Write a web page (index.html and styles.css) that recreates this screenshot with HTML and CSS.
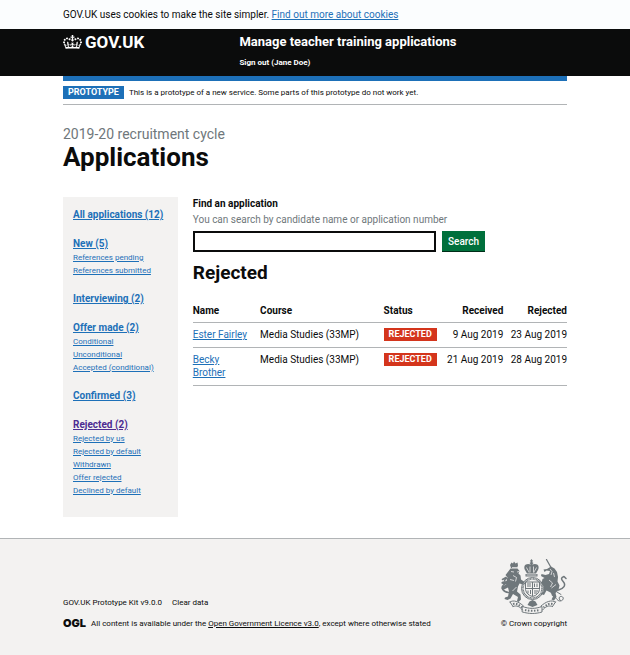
FILE: index.html
```html
<!DOCTYPE html>
<html lang="en">
<head>
<meta charset="utf-8">
<meta name="viewport" content="width=device-width, initial-scale=1">
<title>Applications - Manage teacher training applications</title>
<link rel="stylesheet" href="styles.css">
</head>
<body>
<div class="cookie-bar">
  <p class="container">GOV.UK uses cookies to make the site simpler. <a href="#">Find out more about cookies</a></p>
</div>
<header class="header">
  <div class="container header-inner">
    <a class="logo" href="#">
      <svg class="crown" viewBox="0 0 132 97" aria-hidden="true"><path d="M25 30.2c3.5 1.5 7.7-.2 9.1-3.7 1.5-3.6-.2-7.8-3.9-9.2-3.6-1.4-7.6.3-9.1 3.9-1.4 3.5.3 7.5 3.9 9zM9 39.5c3.6 1.5 7.8-.2 9.2-3.7 1.5-3.6-.2-7.8-3.9-9.1-3.6-1.5-7.6.2-9.1 3.8-1.4 3.5.3 7.5 3.8 9zM4.4 57.2c3.5 1.5 7.7-.2 9.1-3.8 1.5-3.6-.2-7.7-3.9-9.1-3.5-1.5-7.6.3-9.1 3.8-1.4 3.5.3 7.6 3.9 9.1zm38.3-21.4c3.5 1.5 7.7-.2 9.1-3.8 1.5-3.6-.2-7.7-3.9-9.1-3.6-1.5-7.6.3-9.1 3.8-1.3 3.6.4 7.7 3.9 9.1zm64.4-5.6c-3.6 1.5-7.8-.2-9.1-3.7-1.5-3.6.2-7.8 3.8-9.2 3.6-1.4 7.7.3 9.2 3.9 1.3 3.5-.4 7.5-3.9 9zm15.9 9.3c-3.6 1.5-7.7-.2-9.1-3.7-1.5-3.6.2-7.8 3.7-9.1 3.6-1.5 7.7.2 9.2 3.8 1.5 3.5-.3 7.5-3.8 9zm4.7 17.7c-3.6 1.5-7.8-.2-9.2-3.8-1.5-3.6.2-7.7 3.9-9.1 3.6-1.5 7.7.3 9.2 3.8 1.3 3.5-.4 7.6-3.9 9.1zM89.3 35.8c-3.6 1.5-7.8-.2-9.2-3.8-1.4-3.6.2-7.7 3.9-9.1 3.6-1.5 7.7.3 9.2 3.8 1.4 3.6-.3 7.7-3.9 9.1zM69.7 17.7l8.9 4.7V9.3l-8.9 2.8c-.2-.3-.5-.6-.9-.9L72.4 0H59.6l3.5 11.2c-.3.3-.6.5-.9.9l-8.8-2.8v13.1l8.8-4.7c.3.3.6.7.9.9l-5 15.4v.1c-.2.8-.4 1.6-.4 2.4 0 4.1 3.1 7.5 7 8.1h.2c.3 0 .7.1 1 .1.4 0 .7 0 1-.1h.2c4-.6 7.1-4.1 7.1-8.1 0-.8-.1-1.7-.4-2.4V34l-5.1-15.4c.4-.2.7-.6 1-.9zM66 92.8c16.9 0 32.8 1.1 47.1 3.2 4-16.9 8.9-26.7 14-33.5l-9.6-3.4c1 4.9 1.1 7.2 0 10.2-1.5-1.4-3-4.3-4.2-8.7L108.6 76c2.8-2 5-3.2 7.5-3.3-4.4 9.4-10 11.9-13.6 11.2-4.3-.8-6.3-4.6-5.6-7.9 1-4.7 5.7-5.9 8-.5 4.3-8.7-3-11.4-7.6-8.8 7.1-7.2 7.9-13.5 2.1-21.1-8 6.1-8.1 12.3-4.5 20.8-4.7-5.4-12.1-2.5-9.5 6.2 3.4-5.2 7.9-2 7.2 3.1-.6 4.3-6.4 7.8-13.5 7.2-10.3-.9-10.9-8-11.2-13.8 2.5-.5 7.1 1.8 11 7.3L80.2 60c-4.1 4.4-8 5.3-12.3 5.4 1.4-4.4 8-11.6 8-11.6H55.5s6.4 7.2 7.9 11.6c-4.2-.1-8-1-12.3-5.4l1.4 16.4c3.9-5.5 8.5-7.7 10.9-7.3-.3 5.8-.9 12.8-11.1 13.8-7.2.6-12.9-2.9-13.5-7.2-.7-5 3.8-8.3 7.1-3.1 2.7-8.7-4.6-11.6-9.4-6.2 3.7-8.5 3.6-14.7-4.6-20.8-5.8 7.6-5 13.9 2.2 21.1-4.7-2.6-11.9.1-7.7 8.8 2.3-5.5 7.1-4.2 8.1.5.7 3.3-1.3 7.1-5.7 7.9-3.5.7-9-1.8-13.5-11.2 2.5.1 4.7 1.3 7.5 3.3l-4.7-15.4c-1.2 4.4-2.7 7.2-4.3 8.7-1.1-3-.9-5.3 0-10.2l-9.5 3.4c5 6.9 9.9 16.7 14 33.5 14.8-2.1 30.8-3.2 47.7-3.2z"/></svg>
      <span>GOV.UK</span>
    </a>
    <div class="header-content">
      <a class="service-name" href="#">Manage teacher training applications</a>
      <a class="sign-out" href="#">Sign out (Jane Doe)</a>
    </div>
  </div>
</header>
<div class="container">
  <div class="phase-banner">
    <strong class="tag phase-tag">PROTOTYPE</strong>
    <span>This is a prototype of a new service. Some parts of this prototype do not work yet.</span>
  </div>
  <main>
    <h1><span class="caption">2019-20 recruitment cycle</span>Applications</h1>
    <div class="columns">
      <nav class="sidebar" aria-label="Application status">
        <section><h2><a href="#">All applications (12)</a></h2></section>
        <section>
          <h2><a href="#">New (5)</a></h2>
          <ul><li><a href="#">References pending</a></li><li><a href="#">References submitted</a></li></ul>
        </section>
        <section><h2><a href="#">Interviewing (2)</a></h2></section>
        <section>
          <h2><a href="#">Offer made (2)</a></h2>
          <ul><li><a href="#">Conditional</a></li><li><a href="#">Unconditional</a></li><li><a href="#">Accepted (conditional)</a></li></ul>
        </section>
        <section><h2><a href="#">Confirmed (3)</a></h2></section>
        <section>
          <h2><a class="current" href="#">Rejected (2)</a></h2>
          <ul><li><a href="#">Rejected by us</a></li><li><a href="#">Rejected by default</a></li><li><a href="#">Withdrawn</a></li><li><a href="#">Offer rejected</a></li><li><a href="#">Declined by default</a></li></ul>
        </section>
      </nav>
      <div class="content">
        <form>
          <label for="search">Find an application</label>
          <p class="hint" id="search-hint">You can search by candidate name or application number</p>
          <div class="search-row">
            <input id="search" type="text" aria-describedby="search-hint">
            <button type="button">Search</button>
          </div>
        </form>
        <h2 class="list-title">Rejected</h2>
        <table>
          <thead>
            <tr><th class="col-name">Name</th><th class="col-course">Course</th><th class="col-status">Status</th><th class="col-received date">Received</th><th class="date">Rejected</th></tr>
          </thead>
          <tbody>
            <tr><td><a href="#">Ester Fairley</a></td><td>Media Studies (33MP)</td><td><strong class="tag rejected-tag">REJECTED</strong></td><td class="date">9 Aug 2019</td><td class="date">23 Aug 2019</td></tr>
            <tr><td><a href="#">Becky Brother</a></td><td>Media Studies (33MP)</td><td><strong class="tag rejected-tag">REJECTED</strong></td><td class="date">21 Aug 2019</td><td class="date">28 Aug 2019</td></tr>
          </tbody>
        </table>
      </div>
    </div>
  </main>
</div>
<footer class="footer">
  <div class="container footer-inner">
    <div>
      <ul class="footer-links"><li><a href="#">GOV.UK Prototype Kit v9.0.0</a></li><li><a href="#">Clear data</a></li></ul>
      <div class="licence">
        <span class="ogl">OGL</span>
        <span>All content is available under the <a href="#">Open Government Licence v3.0</a>, except where otherwise stated</span>
      </div>
    </div>
    <a class="copyright" href="#">
      <svg class="crest" viewBox="0 0 132 110" aria-hidden="true">
        <g fill="none" stroke="#6f777b" stroke-linecap="round" stroke-linejoin="round">
          <path stroke-width="3" d="M15 67C4 66-1 57 5 52s12-9 5-15l-7 4M10 37l-3 7"/>
          <path stroke-width="3" d="M115 62c11-3 15-10 10-16s-6-8 1-11l4 4"/>
          <path stroke-width="2.500" d="M91 1l9 16"/>
          <path stroke-width="2" d="M102 72c9 3 9 12 16 12s9-8 3-9-6 6-2 8M112 66l8 5"/>
          <path stroke-width="2" d="M18 86c7-5 17-1 27 8M24 95c8-3 13 0 19 7M18 86l6 9M109 86c-8-5-19-1-29 8M103 95c-8-3-14 0-20 7M109 86l-6 9M43 95c13 5 26 5 39 0v11c-13 4-26 4-39 0z"/>
          <path stroke-width="4" stroke-dasharray="3 3" stroke-linecap="butt" d="M24 90c7-2 12 2 18 7M103 90c-7-2-12 2-18 7M48 102c9 2 20 2 30 0"/>
        </g>
        <g fill="#6f777b">
          <path d="M18 12l3-5 3 2 2-4 3 4 4-2 1 6-2 5H20z"/>
          <path d="M19 19h14l4 5-2 5 4 4 1 8 7 5-3 5-7-2-3 6-2 10 7 6 1 10-5 5-3-2 2-8-10-6-5 9-6 3-6-2 1-3 6-2 2-10-2-8-8 4-5-2 2-4 8-5-6 1-5-3 3-3 9-1 1-7-4-5z"/>
          <path d="M92 20l8-5 7 4 5 7 2 10-1 9 4 8-2 9-6 6 2 8-5 7-5-2 3-6-5-8-8-4-5 9-7-2 6-5 1-9-5-7 2-9 4-2-7-4 1-4 8 2 7-2 2-6-7-1-4 3-2-5z"/>
          <path d="M61 0l3 4-2 2 3 2-3 3c11-4 16 3 12 11l-4 7H52l-4-7c-4-8 1-15 12-11l-3-3 3-2-2-2z"/>
          <path d="M49 30h24v5H49z"/>
          <path d="M57 85l6-3 6 3 4 7-10 4-10-4z"/>
        </g>
        <g fill="none" stroke="#6f777b" stroke-width="2">
          <circle cx="63" cy="59" r="22"/><circle cx="63" cy="59" r="19" stroke-width="3" stroke-dasharray="2 1"/>
          <path d="M49 46h28v15q-2 11-14 14-12-3-14-14zM63 46v28M49 59h28M52 50h8M52 54h8M67 49v7M72 49v7M54 63v6M59 62v8M66 64h8M66 68h6"/>
        </g>
        <g fill="none" stroke="#f3f2f1" stroke-width="1.500">
          <path d="M51 17c2 5 4 6 5 10M58 15v12M65 15v12M71 17c-2 5-4 6-5 10M51 32h20"/>
          <path d="M22 17h11M20 25l6 1M32 26l4-1M24 33l7 4-2 8M18 41l8 2M31 56l-8 8M98 20l4 5-2 7M105 28l2 8M96 42l7 6-4 8M110 51l-9 7"/>
        </g>
      </svg>
      <span>© Crown copyright</span>
    </a>
  </div>
</footer>
</body>
</html>
```
FILE: styles.css
```css
* { box-sizing: border-box; }
body {
  margin: 0;
  min-height: 100vh;
  display: flex;
  flex-direction: column;
  color: #0b0c0c;
  background: #fff;
  font: 10px/13px Roboto, "Liberation Sans", sans-serif;
}
h1, h2, p, ul { margin: 0; padding: 0; }
ul { list-style: none; }
a { color: #1d70b8; }
.container { width: 80%; margin: 0 auto; }
.cookie-bar { padding: 8px 0; background: #fbfdfe; }
.header { color: #fff; background: linear-gradient(#0b0c0c 47px, #fff 47px); }
.header a { color: #fff; text-decoration: none; }
.header-inner {
  display: grid;
  grid-template-columns: 35fr 65fr;
  height: 52px;
  padding-top: 5px;
  border-bottom: 5px solid #1d70b8;
}
.logo { display: flex; align-items: center; align-self: start; gap: 3px; font-size: 17px; line-height: 16px; font-weight: 700; }
.crown { width: 19px; height: 14px; fill: #fff; }
.header-content { display: flex; flex-direction: column; align-items: flex-start; gap: 6px; font-weight: 700; }
.service-name { font-size: 13px; line-height: 16px; }
.sign-out { font-size: 8px; line-height: 13px; }
.phase-banner { display: flex; align-items: center; gap: 5px; padding: 5px 0; border-bottom: 1px solid #b1b4b6; font-size: 8px; }
.tag { display: inline-block; color: #fff; font-size: 9px; line-height: 13px; font-weight: 700; vertical-align: top; }
.phase-tag { padding: 0 5px; background: #1d70b8; }
.rejected-tag { padding: 0 5px; background: #d4351c; }
h1 { padding-top: 20px; font-size: 26px; line-height: 28px; }
.caption { display: block; color: #6f777b; font-size: 14px; line-height: 18px; font-weight: 400; }
.columns { display: grid; grid-template-columns: 23fr 75fr; gap: 15px; margin: 26px 0 21px; }
.sidebar { padding: 11px 10px 20px; background: #f3f2f1; font-size: 8px; }
.sidebar section { margin-bottom: 15px; }
.sidebar section:last-child { margin-bottom: 0; }
.sidebar h2 { font-size: 10px; line-height: 14px; }
.sidebar .current { color: #4c2c92; }
label { display: block; font-weight: 700; }
.hint { margin: 3px 0 5px; color: #6f777b; }
.search-row { display: flex; gap: 6px; }
input { width: 65%; height: 21px; padding: 2px; border: 2px solid #0b0c0c; border-radius: 0; font: inherit; }
button { height: 21px; padding: 0 6px; border: 0; border-bottom: 1px solid #002d18; color: #fff; background: #00703c; font: inherit; font-weight: 500; }
.list-title { margin: 9px 0 13px; font-size: 19px; line-height: 24px; }
table { width: 100%; border-collapse: collapse; table-layout: fixed; }
th, td { padding: 6px 10px 5px 0; border-bottom: 1px solid #b1b4b6; text-align: left; vertical-align: top; }
td { padding-top: 5px; padding-bottom: 6px; }
.date { padding-right: 0; text-align: right; white-space: nowrap; }
.col-name { width: 18%; }
.col-course { width: 33%; }
.col-status { width: 15%; }
.col-received { width: 17%; }
.footer { flex: 1; padding: 20px 0 25px; border-top: 1px solid #b1b4b6; background: #f3f2f1; font-size: 8px; }
.footer a { color: #0b0c0c; }
.footer-inner { display: flex; justify-content: space-between; align-items: flex-end; }
.footer-links { display: flex; gap: 10px; margin-bottom: 8px; }
.footer-links a, .copyright { text-decoration: none; }
.licence { display: flex; align-items: center; gap: 5px; }
.ogl { font-family: Inter, sans-serif; font-size: 11px; font-weight: 900; }
.copyright { display: flex; flex-direction: column; align-items: center; gap: 3px; }
.crest { width: 66px; height: 55px; }
```
